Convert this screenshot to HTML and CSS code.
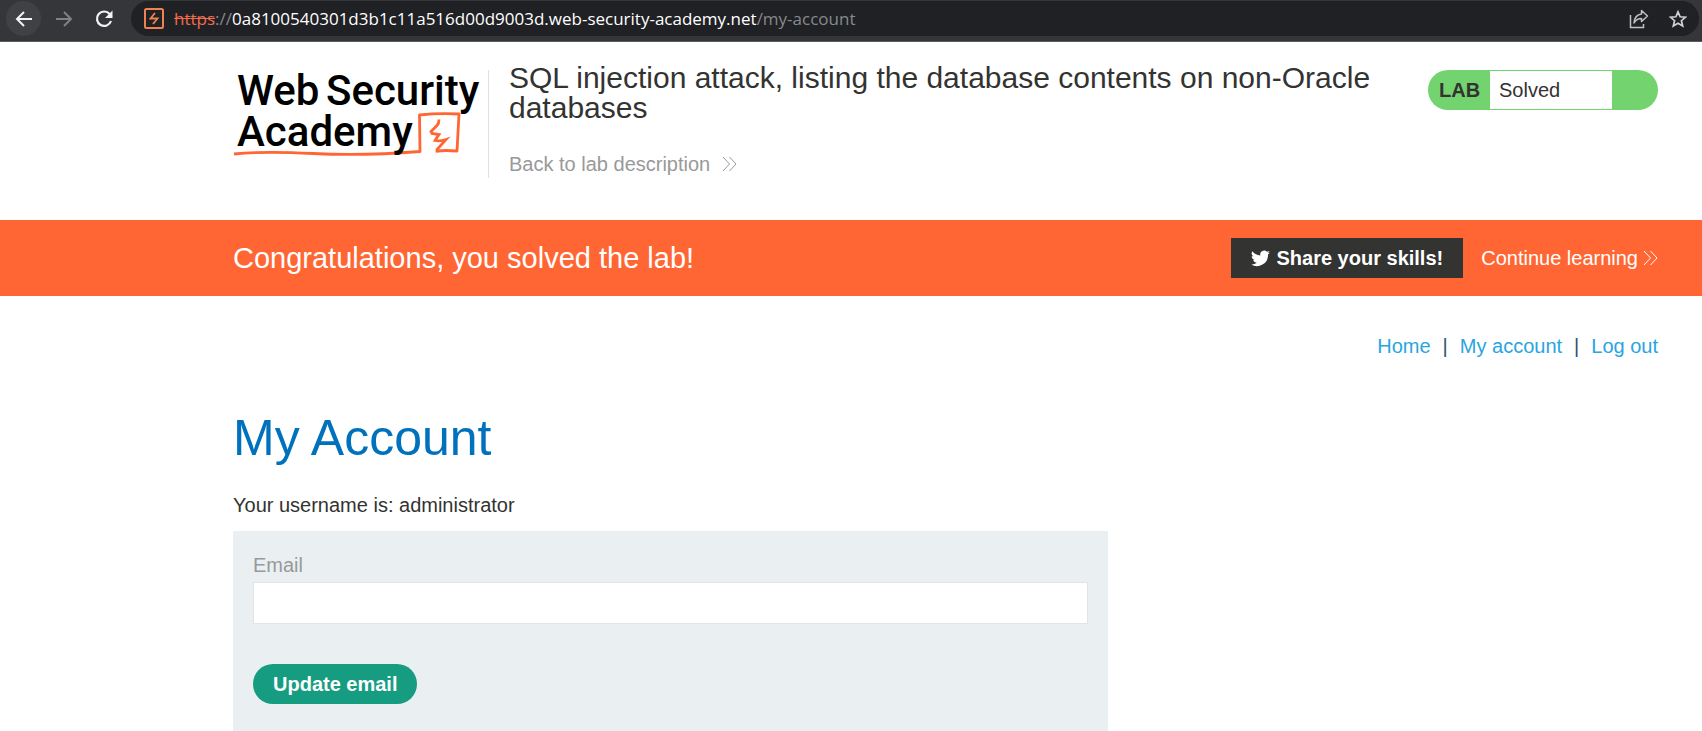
FILE: index.html
```html
<!DOCTYPE html>
<html lang="en">
<head>
<meta charset="utf-8">
<title>SQL injection attack, listing the database contents on non-Oracle databases</title>
<link rel="stylesheet" href="styles.css">
</head>
<body>
<div class="browser-bar">
  <button class="bar-button bar-button-active" type="button" aria-label="Back">
    <svg width="18" height="18" viewBox="0 0 18 18"><path d="M17 9H2M9 2L2 9l7 7" fill="none" stroke="#f1f3f4" stroke-width="2"/></svg>
  </button>
  <button class="bar-button" type="button" aria-label="Forward">
    <svg width="18" height="18" viewBox="0 0 18 18"><path d="M1 9h15M9 2l7 7-7 7" fill="none" stroke="#808184" stroke-width="2"/></svg>
  </button>
  <button class="bar-button" type="button" aria-label="Reload">
    <svg width="20" height="20" viewBox="0 0 20 20"><path d="M15.8 5.2A7.2 7.2 0 1 0 17 12" fill="none" stroke="#f1f3f4" stroke-width="2.2"/><path d="M18.5 1.5V9H11z" fill="#f1f3f4"/></svg>
  </button>
  <div class="address">
    <svg class="site-icon" width="20" height="21" viewBox="0 0 20 21"><rect x="1" y="1" width="18" height="19" rx="1.5" fill="none" stroke="#ee8352" stroke-width="2"/><path d="M11 5L6.500 10.500h7L9 16" fill="none" stroke="#ee8352" stroke-width="1.800"/></svg>
    <div class="url"><span class="url-scheme">https</span><span class="url-dim">://</span>0a8100540301d3b1c11a516d00d9003d.web-security-academy.net<span class="url-dim">/my-account</span></div>
    <button class="address-button" type="button" aria-label="Share">
      <svg width="20" height="20" viewBox="0 0 20 20"><path d="M1.500 6v12.500h13V15" fill="none" stroke="#c0c1c3" stroke-width="1.500"/><path d="M12.500 1.500l6 5.500-6 5.500V9.500c-3.500 0-5.500 1-7.500 4.500 .4-5 3-8.500 7.500-9z" fill="none" stroke="#c0c1c3" stroke-width="1.500" stroke-linejoin="round"/></svg>
    </button>
    <button class="address-button" type="button" aria-label="Bookmark">
      <svg width="18" height="18" viewBox="0 0 18 18"><path d="M9 1.800l2.100 5 5.400.4-4.100 3.500 1.300 5.300L9 13.200 4.300 16l1.300-5.300-4.100-3.500 5.400-.4z" fill="none" stroke="#d0d1d3" stroke-width="1.700"/></svg>
    </button>
  </div>
</div>

<header class="lab-header">
  <a class="logo" href="#" aria-label="Web Security Academy">
    <svg width="255" height="108" viewBox="0 0 255 108">
      <path d="M1 84Q30 81 80 83.500T187 81.500L186.500 45Q205 43 226 44L224 81Q212 80 204 81" fill="none" stroke="#ff6633" stroke-width="2.800" stroke-linejoin="round"/>
      <path d="M206 49.500q0 4-2 6l-6 6 1 2 7 1-4 6q5 1 11-1l-9 10v3" fill="none" stroke="#ff6633" stroke-width="2.800"/>
      <text class="logo-text" x="4" y="35">Web</text>
      <text class="logo-text" x="93" y="35">Security</text>
      <text class="logo-text" x="4" y="76">Academy</text>
    </svg>
  </a>
  <div class="lab-title">
    <h2>SQL injection attack, listing the database contents on non-Oracle databases</h2>
    <a class="back-link" href="#">Back to lab description
      <svg width="15" height="16" viewBox="0 0 15 16"><path d="M1 1l6.500 7L1 15M7.500 1L14 8l-6.500 7" fill="none" stroke="currentColor"/></svg>
    </a>
  </div>
  <div class="lab-status"><span class="status-label">LAB</span><span class="status-value">Solved</span></div>
</header>

<section class="banner">
  <h4>Congratulations, you solved the lab!</h4>
  <div class="banner-actions">
    <button class="share-button" type="button">
      <svg width="19" height="17" viewBox="0 0 24 20"><path d="M24 2.400a10 10 0 0 1-2.800.8A5 5 0 0 0 23.300.4a10 10 0 0 1-3.100 1.200 4.900 4.900 0 0 0-8.400 4.500A14 14 0 0 1 1.700.9a4.900 4.900 0 0 0 1.500 6.600 5 5 0 0 1-2.200-.6 4.900 4.900 0 0 0 3.900 4.900 5 5 0 0 1-2.200.1 4.900 4.900 0 0 0 4.600 3.400A10 10 0 0 1 0 17.400 14 14 0 0 0 21.500 5z" fill="#fff"/></svg>
      Share your skills!
    </button>
    <a class="continue-link" href="#">Continue learning
      <svg width="15" height="16" viewBox="0 0 15 16"><path d="M1 1l6.500 7L1 15M7.500 1L14 8l-6.500 7" fill="none" stroke="currentColor"/></svg>
    </a>
  </div>
</section>

<main class="page">
  <nav class="top-links"><a href="#">Home</a><span>|</span><a href="#">My account</a><span>|</span><a href="#">Log out</a></nav>
  <h1>My Account</h1>
  <p class="username">Your username is: administrator</p>
  <form class="email-form">
    <label for="email">Email</label>
    <input id="email" type="email" name="email">
    <button type="submit">Update email</button>
  </form>
</main>
</body>
</html>
```
FILE: styles.css
```css
* { box-sizing: border-box; }

body {
  margin: 0;
  background: #fff;
  color: #333332;
  font: 20px/24px "Liberation Sans", Arial, sans-serif;
}

h1, h2, h4, p { margin: 0; font-weight: 400; }
a { color: #29a5e0; text-decoration: none; }
button { border: 0; padding: 0; font: inherit; cursor: pointer; }
svg { display: block; flex: none; }

.browser-bar {
  display: flex;
  align-items: center;
  gap: 5px;
  height: 42px;
  padding: 1px 3px 5px 6px;
  background: #35363a;
  border-bottom: 1px solid #5b5c60;
}

.bar-button {
  display: grid;
  place-items: center;
  width: 35px;
  height: 35px;
  border-radius: 50%;
  background: none;
}

.bar-button-active { background: #404145; }

.address {
  display: flex;
  flex: 1;
  align-items: center;
  gap: 20px;
  height: 35px;
  margin-left: 5px;
  padding: 0 12px 0 13px;
  border-radius: 18px;
  background: #202124;
}

.site-icon { margin-right: -10px; }

.url {
  flex: 1;
  color: #fff;
  font: 17px/24px "Open Sans", "Noto Sans", sans-serif;
  white-space: nowrap;
}

.url-scheme { color: #ee6b4d; text-decoration: line-through; }
.url-dim { color: #87898c; }
.address-button { background: none; }

.lab-header {
  display: flex;
  align-items: flex-start;
  padding: 28px 44px 42px 233px;
}

.logo { border-right: 1px solid #e0e0e0; }

.logo-text {
  font-family: Roboto, sans-serif;
  font-size: 42px;
  font-weight: 500;
}

.lab-title {
  flex: 1;
  padding: 0 57px 0 20px;
}

.lab-title h2 {
  margin: -7px 0 29px;
  font-size: 30px;
  line-height: 30px;
}

.back-link, .continue-link {
  display: flex;
  align-items: center;
}

.back-link { gap: 12px; color: #999; }

.lab-status {
  display: flex;
  width: 230px;
  height: 40px;
  padding: 1px 46px 1px 11px;
  border-radius: 20px;
  background: #72d36f;
  line-height: 38px;
}

.status-label { width: 51px; font-weight: 700; }
.status-value { flex: 1; padding-left: 9px; background: #fff; }

.banner {
  display: flex;
  align-items: center;
  justify-content: space-between;
  height: 76px;
  padding: 0 44px 0 233px;
  background: #ff6633;
  color: #fff;
}

.banner h4 { font-size: 29px; line-height: 32px; }
.banner-actions { display: flex; align-items: center; gap: 18px; }

.share-button {
  display: flex;
  align-items: center;
  gap: 6px;
  height: 40px;
  padding: 0 20px;
  background: #333332;
  color: #fff;
  font-weight: 700;
}

.continue-link { gap: 5px; color: #fff; }

.page { padding: 38px 44px 0 233px; }

.top-links {
  display: flex;
  justify-content: flex-end;
  gap: 12px;
}

.top-links span { color: #2c5070; }

h1 {
  margin-top: 50px;
  color: #0071bc;
  font-size: 50px;
  line-height: 60px;
}

.username { margin: 25px 0 14px; }

.email-form {
  max-width: 875px;
  padding: 22px 20px 28px;
  background: #eaeff2;
}

.email-form label { display: block; color: #999; }

.email-form input {
  display: block;
  width: 100%;
  height: 42px;
  margin: 5px 0 40px;
  padding: 0 10px;
  border: 1px solid #e4e4e4;
  background: #fff;
  font: inherit;
}

.email-form button {
  height: 40px;
  padding: 0 20px;
  border-radius: 20px;
  background: #169c80;
  color: #fff;
  font-weight: 700;
}
```
